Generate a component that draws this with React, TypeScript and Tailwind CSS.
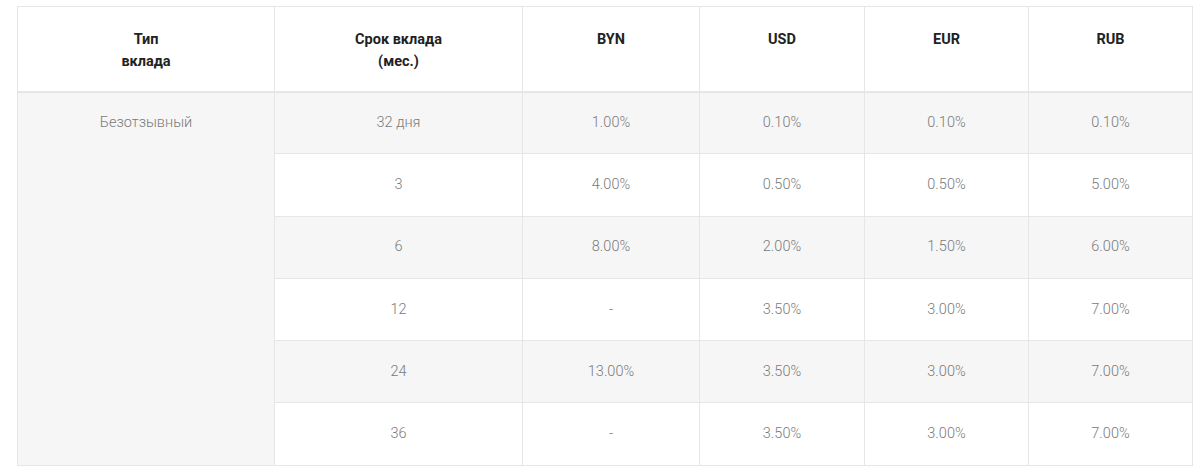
const rows: [string, string, string, string, string][] = [
  ["32 дня", "1.00%", "0.10%", "0.10%", "0.10%"],
  ["3", "4.00%", "0.50%", "0.50%", "5.00%"],
  ["6", "8.00%", "2.00%", "1.50%", "6.00%"],
  ["12", "-", "3.50%", "3.00%", "7.00%"],
  ["24", "13.00%", "3.50%", "3.00%", "7.00%"],
  ["36", "-", "3.50%", "3.00%", "7.00%"],
];

const cell = "border border-[#e6e6e6] text-center align-middle h-[62.3px] p-0";

export default function App() {
  return (
    <div className="bg-white w-[1200px] h-[474px] pt-[6px] pl-[17px] font-['Roboto',sans-serif] text-[14.5px]">
      <table className="table-fixed border-collapse w-[1175px]">
        <colgroup>
          <col className="w-[257px]" />
          <col className="w-[248px]" />
          <col className="w-[177px]" />
          <col className="w-[165px]" />
          <col className="w-[164px]" />
          <col className="w-[164px]" />
        </colgroup>
        <thead>
          <tr className="h-[85px]">
            {[
              <>Тип<br />вклада</>,
              <>Срок вклада<br />(мес.)</>,
              "BYN",
              "USD",
              "EUR",
              "RUB",
            ].map((h, i) => (
              <th
                key={i}
                className="border border-[#e6e6e6] border-b-2 align-top text-center pt-[22px] font-bold text-[#222] leading-[22px]"
              >
                {h}
              </th>
            ))}
          </tr>
        </thead>
        <tbody className="font-light text-[#7a7a7a]">
          {rows.map((r, i) => (
            <tr key={i} className={i % 2 === 0 ? "bg-[#f6f6f6]" : "bg-white"}>
              {i === 0 && (
                <td
                  rowSpan={rows.length}
                  className="border border-[#e6e6e6] bg-[#f6f6f6] text-center align-top pt-[19px]"
                >
                  Безотзывный
                </td>
              )}
              {r.map((v, j) => (
                <td key={j} className={cell}>
                  {v}
                </td>
              ))}
            </tr>
          ))}
        </tbody>
      </table>
    </div>
  );
}
